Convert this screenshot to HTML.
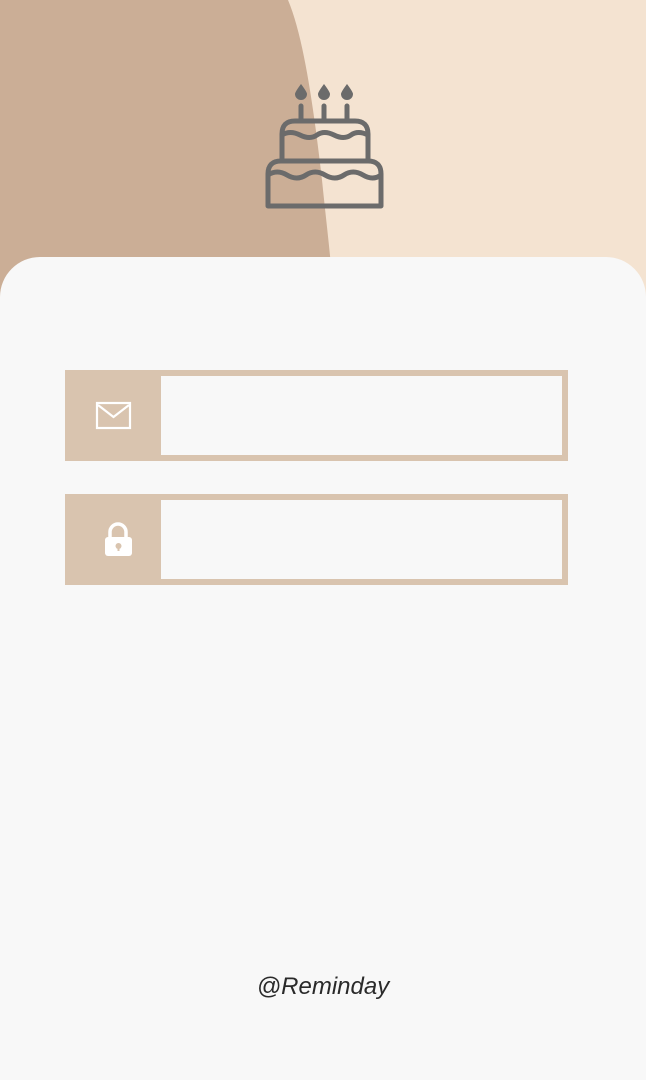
<!DOCTYPE html>
<html><head><style>
body{margin:0;width:646px;height:1080px;overflow:hidden;background:#f4e3d1;position:relative;font-family:"Liberation Sans",sans-serif}
.box{position:absolute;left:65px;width:503px;height:91px;background:#d9c4af}
.box .in{position:absolute;left:96px;top:6px;right:6px;bottom:6px;background:#f8f8f8}
</style></head><body>
<svg width="646" height="300" style="position:absolute;left:0;top:0">
<path d="M0 0 H288 C305 40 315 120 322 180 C326 220 330 250 334 300 H0 Z" fill="#cbae96"/>
<g fill="none" stroke="#6b6b6b" stroke-width="5" stroke-linecap="round" stroke-linejoin="round">
<path d="M301 106V120M324 106V120M347 106V120"/>
<path d="M282 160V134Q282 121 295 121H355Q368 121 368 134V160"/>
<path d="M282 135Q290 130 300 135T317 135T334 135T351 135T368 135"/>
<path d="M268 206V174Q268 161 281 161H368Q381 161 381 174V206Z"/>
<path d="M268 175Q277 169 287 175T306 175T325 175T344 175T363 175T381 175"/>
</g>
<g fill="#6b6b6b">
<path d="M301 84Q295 92 295 94A6 6 0 0 0 307 94Q307 92 301 84Z"/>
<path d="M324 84Q318 92 318 94A6 6 0 0 0 330 94Q330 92 324 84Z"/>
<path d="M347 84Q341 92 341 94A6 6 0 0 0 353 94Q353 92 347 84Z"/>
</g>
</svg>
<div style="position:absolute;left:0;top:257px;width:646px;height:823px;background:#f8f8f8;border-radius:40px 40px 0 0"></div>
<div class="box" style="top:370px"><div class="in"></div>
<svg style="position:absolute;left:30px;top:31px" width="38" height="30"><rect x="2" y="2" width="33" height="25" fill="none" stroke="#fff" stroke-width="2.2"/><path d="M3 4L18.5 16L34 4" fill="none" stroke="#fff" stroke-width="2.2"/></svg>
</div>
<div class="box" style="top:494px"><div class="in"></div>
<svg style="position:absolute;left:38px;top:28px" width="30" height="36"><path d="M7 17V10A8 8 0 0 1 23 10V17" fill="none" stroke="#fff" stroke-width="3.5"/><rect x="2" y="15" width="27" height="19" rx="3" fill="#fff"/><circle cx="15.5" cy="24" r="3" fill="#d9c4af"/><rect x="14.5" y="24" width="2" height="5" fill="#d9c4af"/></svg>
</div>
<div style="position:absolute;left:0;width:646px;top:973px;text-align:center;font-style:italic;font-size:24px;color:#2a2a2a">@Reminday</div>
</body></html>
